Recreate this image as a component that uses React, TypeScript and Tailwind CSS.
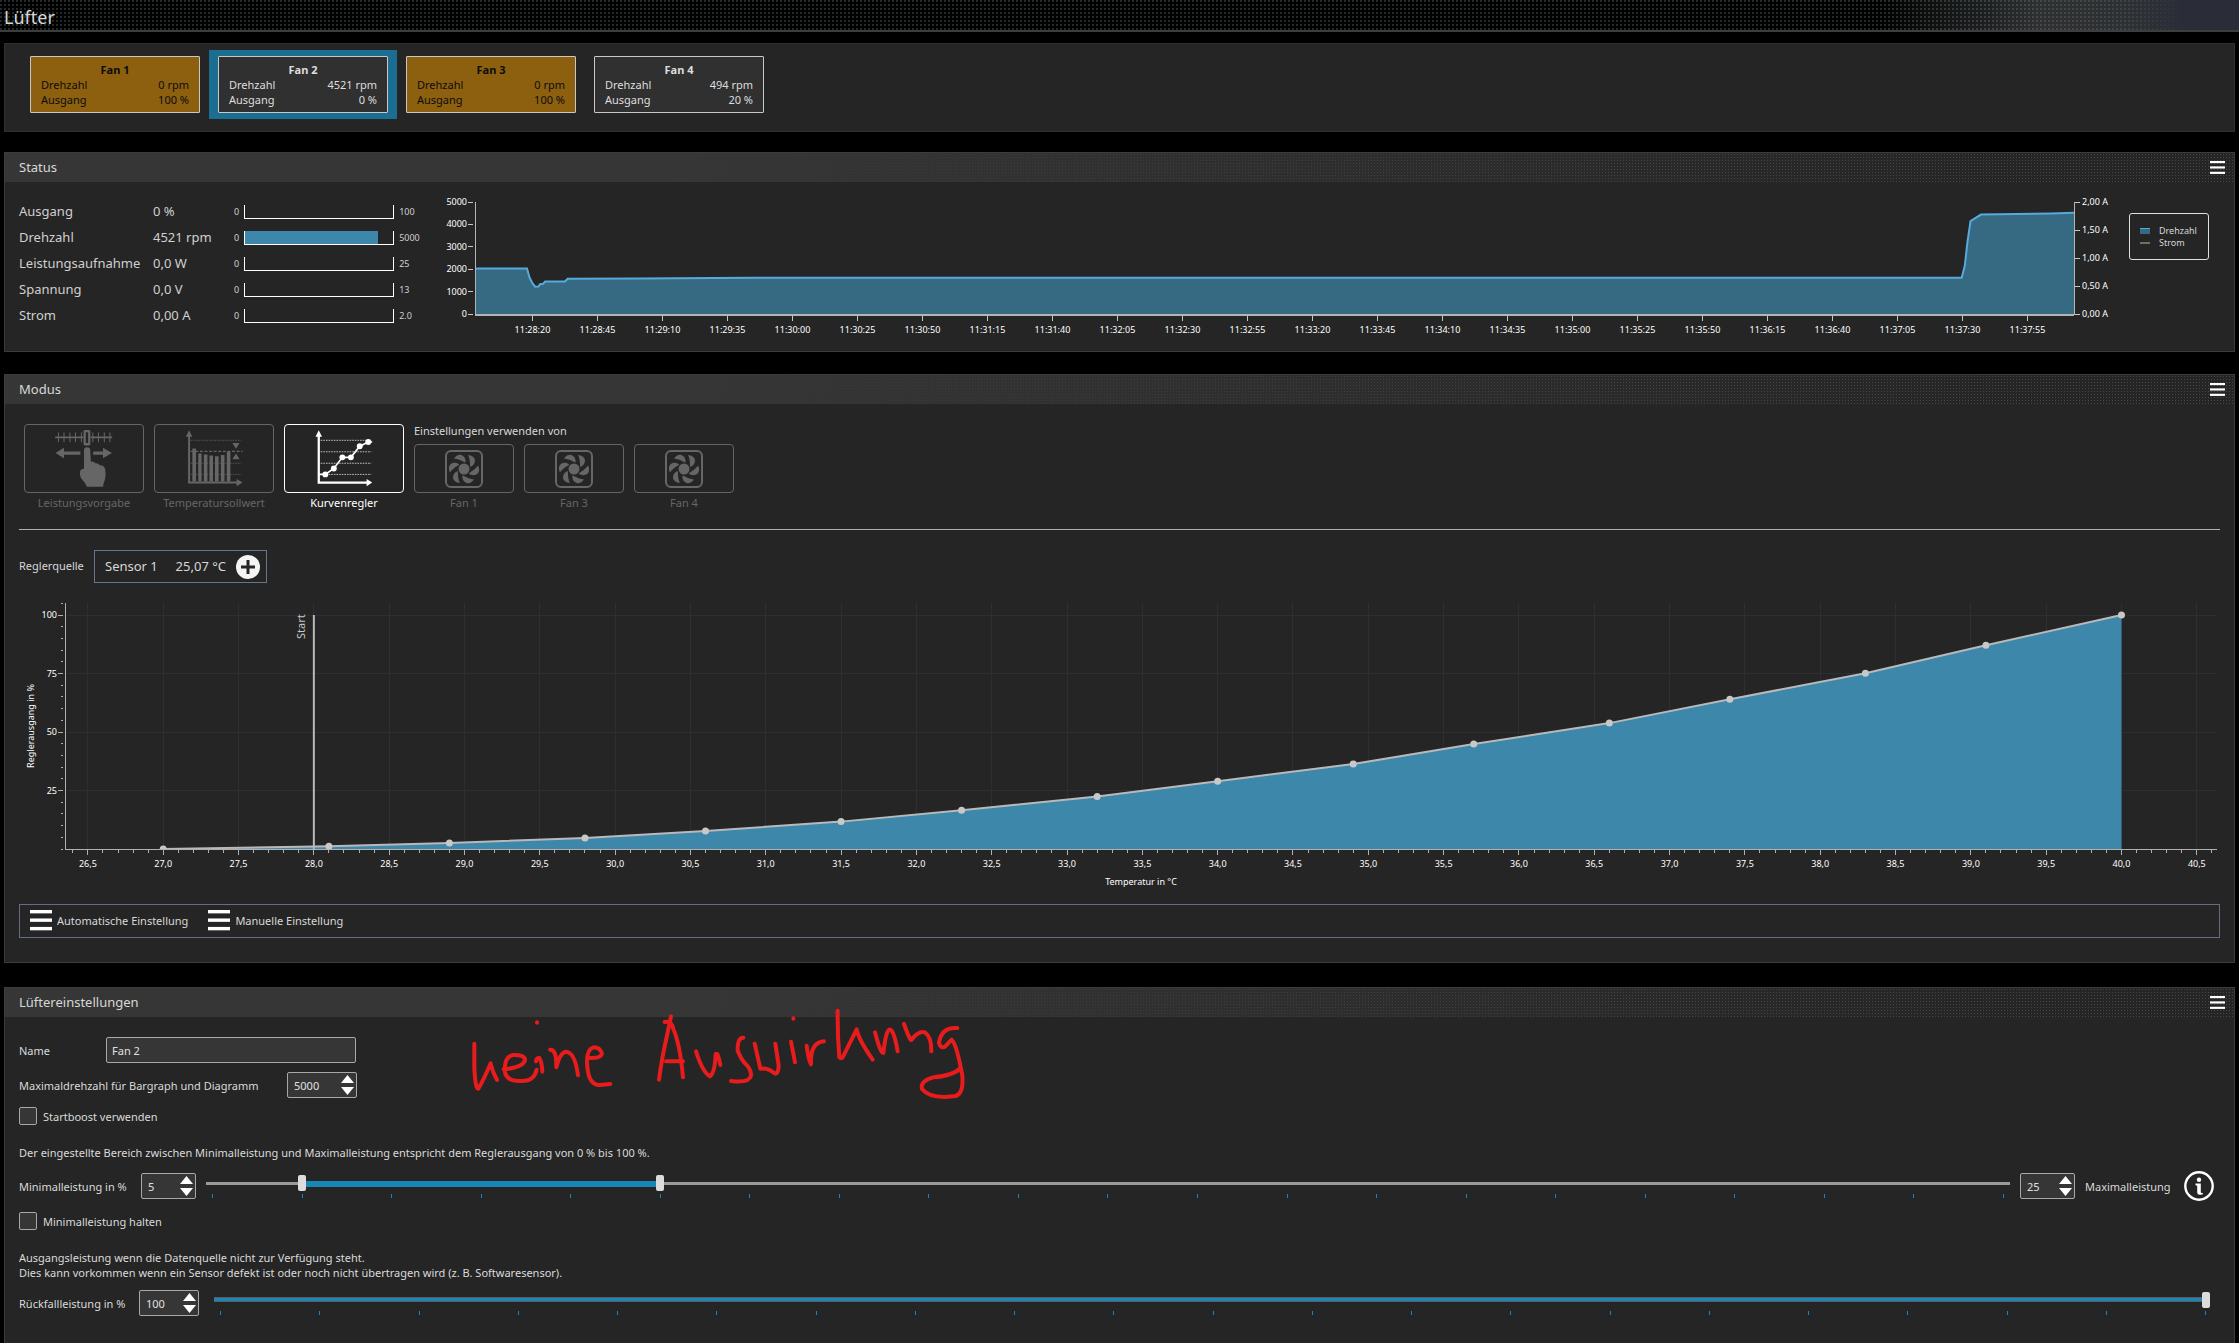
import { useState, type ReactNode } from 'react';
import { clsx } from 'clsx';

const fans = [
  { name: 'Fan 1', rpm: '0 rpm', output: '100 %', warning: true },
  { name: 'Fan 2', rpm: '4521 rpm', output: '0 %', warning: false },
  { name: 'Fan 3', rpm: '0 rpm', output: '100 %', warning: true },
  { name: 'Fan 4', rpm: '494 rpm', output: '20 %', warning: false },
];

const readings = [
  { label: 'Ausgang', value: '0 %', max: '100', fill: 0 },
  { label: 'Drehzahl', value: '4521 rpm', max: '5000', fill: 90 },
  { label: 'Leistungsaufnahme', value: '0,0 W', max: '25', fill: 0 },
  { label: 'Spannung', value: '0,0 V', max: '13', fill: 0 },
  { label: 'Strom', value: '0,00 A', max: '2.0', fill: 0 },
];

// temperature in °C, controller output in %
const curve = [
  [27, 0], [28.1, 1.2], [28.9, 2.6], [29.8, 4.7], [30.6, 7.7], [31.5, 11.7],
  [32.3, 16.6], [33.2, 22.4], [34, 29], [34.9, 36.3], [35.7, 44.9], [36.6, 53.8],
  [37.4, 64], [38.3, 75.1], [39.1, 87.1], [40, 100],
];

// seconds since the left edge of the chart, rpm
const history = [
  [0, 2030], [20, 2030], [21, 1620], [22.2, 1350], [23.2, 1220], [24.4, 1230], [25, 1330],
  [26.2, 1350], [27, 1450], [34.6, 1450], [35.6, 1570], [63, 1590], [106, 1615],
  [571.8, 1620], [573, 2150], [574, 3200], [575.2, 4150], [579.2, 4440], [606, 4490], [615, 4521],
];

function MenuIcon({ className }: { className: string }) {
  return (
    <svg viewBox="0 0 15 13" preserveAspectRatio="none" className={className} fill="currentColor">
      <rect width="15" height="2" />
      <rect y="5" width="15" height="2" />
      <rect y="10" width="15" height="2" />
    </svg>
  );
}

function Panel({ title, className, children }: { title: string; className?: string; children: ReactNode }) {
  return (
    <section className={clsx('relative border border-[#3c3c3c] bg-[#252525]', className)}>
      <header className="flex h-[29px] items-center justify-between pl-3.5 pr-[9px] [background:linear-gradient(to_right,#363636_30%,#36363600_90%),radial-gradient(circle_at_center,#484848_0.6px,transparent_0.9px)_0_0/3px_3px,#252525]">
        <h2 className="text-[13px] text-[#d8d8d8]">{title}</h2>
        <button aria-label={`Menü ${title}`} className="text-white">
          <MenuIcon className="h-[14px] w-[15px]" />
        </button>
      </header>
      {children}
    </section>
  );
}

function FanTiles() {
  const [selected, setSelected] = useState('Fan 2');

  return (
    <section className="flex h-[89px] border border-[#303030] bg-[#252525] px-4 pt-1.5">
      {fans.map((fan) => (
        <button
          key={fan.name}
          onClick={() => setSelected(fan.name)}
          className={clsx('h-[69px] px-[9px] py-1.5 text-[11px] leading-[15px]', selected === fan.name && 'bg-[#1b6d91]')}
        >
          <div
            className={clsx(
              'h-[57px] w-[170px] rounded-[1px] border border-[#c8c8c8] px-2.5 pt-[5px]',
              fan.warning ? 'bg-[#8c600e] text-[#0c0c0c]' : 'bg-[#303030] text-[#dedede]'
            )}
          >
            <div className="text-center font-bold">{fan.name}</div>
            <div className="flex justify-between">
              <span>Drehzahl</span>
              <span>{fan.rpm}</span>
            </div>
            <div className="flex justify-between">
              <span>Ausgang</span>
              <span>{fan.output}</span>
            </div>
          </div>
        </button>
      ))}
    </section>
  );
}

function Readings() {
  return (
    <div className="w-[412px] shrink-0">
      {readings.map((r) => (
        <div key={r.label} className="flex h-[26px] items-center text-[#d0d0d0]">
          <span className="w-[134px] text-[13px]">{r.label}</span>
          <span className="w-[81px] whitespace-nowrap text-[13px]">{r.value}</span>
          <span className="text-[9px]">0</span>
          <div className="mx-[5px] h-[14px] w-[150px] border-x border-b border-white">
            <div className="h-full bg-[#3c87aa]" style={{ width: `${r.fill}%` }} />
          </div>
          <span className="text-[9px]">{r.max}</span>
        </div>
      ))}
    </div>
  );
}

function clock(seconds: number) {
  const h = Math.floor(seconds / 3600);
  const m = Math.floor((seconds % 3600) / 60);
  return [h, m, seconds % 60].map((n) => String(n).padStart(2, '0')).join(':');
}

function StatusChart() {
  const line = history.map(([s, rpm]) => `${s},${5000 - rpm}`).join(' ');
  const ticks = Array.from({ length: 24 }, (_, i) => i * 25);
  const start = 11 * 3600 + 28 * 60 + 20;

  return (
    <svg className="ml-11 mr-[55px] h-[140px] min-w-0 flex-1 overflow-visible text-[9px]" fill="#ffffff">
      <svg width="100%" height="112" viewBox="0 0 615 5000" preserveAspectRatio="none">
        <polygon points={`0,5000 ${line} 615,5000`} fill="#366a82" />
        <polyline points={line} fill="none" stroke="#57aadb" strokeWidth="2" vectorEffect="non-scaling-stroke" />
      </svg>
      <g stroke="#b4b4b4" shapeRendering="crispEdges">
        <line x1="0" x2="0" y1="0" y2="113" />
        <line x1="100%" x2="100%" y1="0" y2="113" />
        <line x1="0" x2="100%" y1="113" y2="113" strokeWidth="2" />
      </g>
      {[5000, 4000, 3000, 2000, 1000, 0].map((v, i) => (
        <g key={v}>
          <line x1="-7" x2="-2" y1={i * 22.4} y2={i * 22.4} stroke="#c8c8c8" shapeRendering="crispEdges" />
          <text x="-8" y={i * 22.4 + 3} textAnchor="end">{v}</text>
        </g>
      ))}
      {['2,00 A', '1,50 A', '1,00 A', '0,50 A', '0,00 A'].map((v, i) => (
        <svg key={v} x="100%" y={i * 28} className="overflow-visible">
          <line x1="1" x2="6" y1="0" y2="0" stroke="#c8c8c8" shapeRendering="crispEdges" />
          <text x="8" y="3">{v}</text>
        </svg>
      ))}
      {ticks.map((s) => {
        const x = `${((s + 22.1) / 615) * 100}%`;
        return (
          <g key={s}>
            <line x1={x} x2={x} y1="114" y2="119" stroke="#c8c8c8" shapeRendering="crispEdges" />
            <text x={x} y="131" textAnchor="middle">{clock(start + s)}</text>
          </g>
        );
      })}
    </svg>
  );
}

function SliderIcon() {
  return (
    <svg viewBox="28 28 360 203" className="size-full" fill="currentColor" stroke="currentColor">
      <path d="M120 65H206M228 65H294" strokeWidth="6" />
      <path d="M130 50V80M147 50V80M165 50V80M182 50V80M200 50V80M235 50V80M252 50V80M270 50V80M287 50V80" strokeWidth="3" />
      <rect x="210" y="46" width="14" height="40" rx="1" fill="none" strokeWidth="7" />
      <path d="M121 113L147 97V108H197V118H147V129ZM293 113L266 97V108H236V118H266V129Z" stroke="none" />
      <path d="M208 103Q208 95 217 95Q227 95 227 103L229 140Q236 136 243 144Q252 143 256 150Q272 150 273 166Q276 185 268 205L266 216H217Q212 204 199 190Q193 176 198 164L208 160Z" stroke="none" />
    </svg>
  );
}

function SetpointIcon() {
  return (
    <svg viewBox="417 28 360 203" className="size-full" fill="currentColor" stroke="currentColor">
      <path d="M521 56V203H670" fill="none" strokeWidth="6" />
      <path d="M521 43L531 63H511ZM684 203L666 192V214Z" stroke="none" />
      <path d="M526 74H680M526 144H680M526 178H680" strokeWidth="3" strokeDasharray="5 3" opacity="0.7" />
      <path d="M526 108H684" strokeWidth="4" strokeDasharray="9 5" />
      <path d="M531 99h11V200h-11ZM549 114h10V200h-10ZM566 117h11V200h-11ZM583 120h11V200h-11ZM600 123h11V200h-11ZM618 119h11V200h-11ZM636 110h11V200h-11Z" stroke="none" />
      <path d="M653 82H675L664 100ZM653 132H675L664 114Z" stroke="none" />
    </svg>
  );
}

function CurveIcon() {
  const points = [[930, 178], [956, 160], [982, 126], [1008, 126], [1035, 92], [1061, 79]];
  return (
    <svg viewBox="807 28 360 203" className="size-full" fill="currentColor" stroke="currentColor">
      <path d="M910 56V203H1060" fill="none" strokeWidth="7" />
      <path d="M910 43L920 63H900ZM1073 203L1056 192V214Z" stroke="none" />
      <path d="M916 74H1070M916 109H1070M916 144H1070M916 178H1070" strokeWidth="3" strokeDasharray="5 3" opacity="0.7" />
      <path d="M910 178H930L956 160L982 126H1008L1035 92L1061 79H1073" fill="none" strokeWidth="5" />
      {points.map(([x, y]) => (
        <circle key={x} cx={x} cy={y} r="9" stroke="none" />
      ))}
    </svg>
  );
}

function FanIcon() {
  return (
    <svg viewBox="0 0 38 38" className="size-[38px]" fill="currentColor">
      <rect x="1" y="1" width="36" height="36" rx="5" fill="none" stroke="currentColor" strokeWidth="2" />
      <circle cx="19" cy="19" r="5.5" />
      {[0, 60, 120, 180, 240, 300].map((angle) => (
        <path
          key={angle}
          d="M-10 -10.5C-8 -13.5 -5 -15 -2.5 -14C1 -12.5 2 -9 1.5 -6.5C-1 -7 -3 -9.5 -10 -10.5Z"
          transform={`translate(19 19) rotate(${angle})`}
        />
      ))}
    </svg>
  );
}

const modes = [
  { label: 'Leistungsvorgabe', icon: SliderIcon },
  { label: 'Temperatursollwert', icon: SetpointIcon },
  { label: 'Kurvenregler', icon: CurveIcon },
];

function ModeBar() {
  const [mode, setMode] = useState('Kurvenregler');

  return (
    <div className="mx-3.5 flex h-[126px] gap-2.5 border-b border-[#b0b0b0] pl-[5px] pt-5 text-[11px] leading-4">
      {modes.map(({ label, icon: Icon }) => (
        <button
          key={label}
          onClick={() => setMode(label)}
          className={clsx('flex w-[120px] flex-col items-center gap-0.5 self-start', mode === label ? 'text-white' : 'text-[#666666]')}
        >
          <span className="flex h-[69px] w-full rounded border border-current">
            <Icon />
          </span>
          {label}
        </button>
      ))}
      <div className="text-[#d8d8d8]">
        <p className="-mt-0.5 mb-1 leading-[18px]">Einstellungen verwenden von</p>
        <div className="flex gap-2.5 text-[#666666]">
          {['Fan 1', 'Fan 3', 'Fan 4'].map((name) => (
            <button key={name} className="flex w-[100px] flex-col items-center gap-0.5">
              <span className="flex h-[49px] w-full items-center justify-center rounded border border-current">
                <FanIcon />
              </span>
              {name}
            </button>
          ))}
        </div>
      </div>
    </div>
  );
}

const T_MIN = 26.348;
const T_MAX = 40.634;
const PLOT_H = 246;
const tx = (t: number) => `${((t - T_MIN) / (T_MAX - T_MIN)) * 100}%`;
const py = (p: number) => PLOT_H - p * 2.34;

function CurveChart() {
  const line = curve.map(([t, p]) => `${t - T_MIN},${py(p)}`).join(' ');
  const tempTicks = Array.from({ length: 143 }, (_, i) => 264 + i);
  const outTicks = Array.from({ length: 22 }, (_, i) => i * 5);

  return (
    <svg className="block h-[286px] w-full overflow-visible text-[9px]" fill="#ffffff">
      <g stroke="#2e2e36" shapeRendering="crispEdges">
        {[25, 50, 75, 100].map((p) => (
          <line key={p} x1="0" x2="100%" y1={py(p)} y2={py(p)} />
        ))}
        {tempTicks.filter((t) => t % 5 === 0).map((t) => (
          <line key={t} x1={tx(t / 10)} x2={tx(t / 10)} y1="0" y2={PLOT_H} />
        ))}
      </g>
      <svg width="100%" height={PLOT_H} viewBox={`0 0 ${T_MAX - T_MIN} ${PLOT_H}`} preserveAspectRatio="none">
        <polygon points={`${27 - T_MIN},${PLOT_H} ${line} ${40 - T_MIN},${PLOT_H}`} fill="#3c87aa" />
        <polyline points={line} fill="none" stroke="#b9b9b9" strokeWidth="2" vectorEffect="non-scaling-stroke" />
      </svg>
      {/* the dot at 0 % is cut off by the axis */}
      <svg width="100%" height={PLOT_H}>
        {curve.map(([t, p]) => (
          <circle key={t} cx={tx(t)} cy={py(p)} r="3.5" fill="#c8c8c8" />
        ))}
      </svg>
      <line x1={tx(28)} x2={tx(28)} y1={py(100)} y2={PLOT_H} stroke="#b9b9b9" strokeWidth="2" />
      <svg x={tx(28)} y={py(100)} className="overflow-visible">
        <text transform="translate(-9 24) rotate(-90)" className="text-[11px]" fill="#c8c8c8">Start</text>
      </svg>
      <g stroke="#b0b0b0" shapeRendering="crispEdges">
        <line x1="0" x2="0" y1="0" y2={PLOT_H} />
        <line x1="0" x2="100%" y1={PLOT_H} y2={PLOT_H} />
        {outTicks.map((p) => (
          <line key={p} x1={p % 25 === 0 && p > 0 ? -7 : -4} x2="-2" y1={py(p)} y2={py(p)} />
        ))}
        {tempTicks.map((t) => (
          <line key={t} x1={tx(t / 10)} x2={tx(t / 10)} y1={PLOT_H + 1} y2={PLOT_H + (t % 5 === 0 ? 6 : 4)} />
        ))}
      </g>
      {[25, 50, 75, 100].map((p) => (
        <text key={p} x="-8" y={py(p) + 3} textAnchor="end">{p}</text>
      ))}
      {tempTicks.filter((t) => t % 5 === 0).map((t) => (
        <text key={t} x={tx(t / 10)} y={PLOT_H + 18} textAnchor="middle">
          {(t / 10).toFixed(1).replace('.', ',')}
        </text>
      ))}
      <text transform={`translate(-31 ${PLOT_H / 2}) rotate(-90)`} textAnchor="middle">Reglerausgang in %</text>
      <text x="50%" y={PLOT_H + 36} textAnchor="middle">Temperatur in °C</text>
    </svg>
  );
}

function NumberBox({ id, value, className }: { id: string; value: number; className: string }) {
  const [current, setCurrent] = useState(value);

  return (
    <div className={clsx('flex h-[26px] shrink-0 items-center rounded-[2px] border border-[#a8a8a8] bg-[#363636] pl-1.5 pr-[2px]', className)}>
      <input
        id={id}
        type="number"
        value={current}
        onChange={(e) => setCurrent(Number(e.target.value))}
        className="w-0 min-w-0 flex-1 bg-transparent text-[11px] text-[#e0e0e0] outline-none [appearance:textfield] [&::-webkit-inner-spin-button]:appearance-none"
      />
      <div className="flex flex-col gap-1 text-white">
        <button aria-label="Erhöhen" onClick={() => setCurrent(current + 1)}>
          <svg viewBox="0 0 13 8" className="block h-2 w-[13px]" fill="currentColor"><path d="M6.5 0L13 8H0Z" /></svg>
        </button>
        <button aria-label="Verringern" onClick={() => setCurrent(current - 1)}>
          <svg viewBox="0 0 13 8" className="block h-2 w-[13px]" fill="currentColor"><path d="M6.5 8L13 0H0Z" /></svg>
        </button>
      </div>
    </div>
  );
}

const thumb =
  'pointer-events-none absolute left-0.5 top-0 h-4 w-[calc(100%-4px)] appearance-none bg-transparent [&::-webkit-slider-thumb]:pointer-events-auto [&::-webkit-slider-thumb]:h-4 [&::-webkit-slider-thumb]:w-2 [&::-webkit-slider-thumb]:appearance-none [&::-webkit-slider-thumb]:rounded-[2px] [&::-webkit-slider-thumb]:bg-[#dcdcdc]';

function Slider({ from, to, labels }: { from?: number; to: number; labels: string[] }) {
  const single = from === undefined;
  const low = from ?? 0;

  return (
    <div className="relative h-[23px] flex-1">
      <div className={clsx('absolute left-0', single ? 'right-1.5 top-[5px] h-[5px] bg-[#5c5c62]' : 'right-0 top-[7px] h-[3px] bg-[#9a9a9a]')} />
      <div className={clsx('absolute top-1.5', single ? 'left-0 right-1.5 h-[3px]' : 'inset-x-1.5 h-1.5')}>
        <div className="h-full bg-[#1886b6]" style={{ marginLeft: `${low}%`, width: `${to - low}%` }} />
      </div>
      <div className="absolute inset-x-1.5 bottom-0 flex h-1 justify-between">
        {Array.from({ length: 21 }, (_, i) => (
          <span key={i} className="w-px bg-[#1886b6]" />
        ))}
      </div>
      {!single && <input type="range" aria-label={labels[0]} defaultValue={from} className={thumb} />}
      <input type="range" aria-label={labels[labels.length - 1]} defaultValue={to} className={thumb} />
    </div>
  );
}

function CheckRow({ label }: { label: string }) {
  return (
    <label className="flex h-[18px] items-center gap-1.5">
      <input type="checkbox" className="size-[18px] appearance-none rounded-[2px] border border-[#a8a8a8] bg-[#363636] checked:bg-[#1886b6]" />
      {label}
    </label>
  );
}

function Scribble() {
  return (
    <svg
      viewBox="0 0 1560 315"
      role="img"
      aria-label="keine Auswirkung"
      className="pointer-events-none absolute left-[455px] top-4 h-[105px] w-[520px] overflow-visible"
      fill="none"
      stroke="#e81c1c"
      strokeWidth="12"
      strokeLinecap="round"
      strokeLinejoin="round"
    >
      <path d="M43 119L43 190Q46 256 55 254Q70 230 92 178Q98 205 111 228" />
      <path d="M131 196Q190 190 195 168Q195 152 160 153Q134 156 134 200Q138 232 180 231Q222 234 230 197" />
      <path d="M228 172Q230 160 238 162Q246 175 247 203M231 55V56" />
      <path d="M270 137Q290 135 289 190Q300 145 318 143Q345 145 354 214" />
      <path d="M384 161Q424 165 426 148Q420 130 400 130Q382 135 381 170Q382 245 420 243L451 240" />
      <path d="M597 227Q604 170 622 90L633 37M614 54Q635 50 640 75Q660 120 669 220M618 172H669" />
      <path d="M708 142Q728 205 750 217Q765 205 767 150L772 150Q778 165 781 183" />
      <path d="M850 101Q832 100 833 140Q845 170 862 185Q874 200 873 215Q868 238 813 231" />
      <path d="M884 119L901 194Q925 190 945 209Q955 210 956 185L946 119" />
      <path d="M993 113L1005 175M1000 43V44" />
      <path d="M1040 125Q1045 165 1053 181Q1050 115 1092 112" />
      <path d="M1133 20Q1132 90 1138 160Q1143 166 1148 160L1190 76Q1195 105 1238 167" />
      <path d="M1245 85Q1262 150 1270 147Q1280 60 1295 80Q1305 95 1313 142" />
      <path d="M1332 60Q1350 110 1354 108Q1375 80 1395 85Q1415 100 1414 142" />
      <path d="M1492 72Q1445 68 1437 115Q1440 135 1455 128L1475 107Q1490 120 1507 215Q1512 275 1480 277Q1410 285 1386 255Q1380 230 1420 220Q1480 215 1502 192" />
    </svg>
  );
}

function FanSettings() {
  return (
    <div className="px-3.5 pt-5 text-[11px] leading-[15px] text-[#dadada]">
      <div className="flex items-center">
        <label htmlFor="fan-name" className="w-[87px]">Name</label>
        <input
          id="fan-name"
          defaultValue="Fan 2"
          className="h-[26px] w-[250px] rounded-[2px] border border-[#a8a8a8] bg-[#363636] px-[5px] text-[#e0e0e0]"
        />
      </div>
      <div className="mt-[9px] flex w-[338px] items-center justify-between">
        <label htmlFor="max-rpm">Maximaldrehzahl für Bargraph und Diagramm</label>
        <NumberBox id="max-rpm" value={5000} className="w-[70px]" />
      </div>
      <div className="mt-[9px]">
        <CheckRow label="Startboost verwenden" />
      </div>
      <p className="mt-5">
        Der eingestellte Bereich zwischen Minimalleistung und Maximalleistung entspricht dem Reglerausgang von 0 % bis 100 %.
      </p>
      <div className="mt-[11px] flex items-center gap-2.5">
        <label htmlFor="min-power" className="w-28 whitespace-nowrap">Minimalleistung in %</label>
        <NumberBox id="min-power" value={5} className="w-[55px]" />
        <Slider from={5} to={25} labels={['Minimalleistung', 'Maximalleistung']} />
        <NumberBox id="max-power" value={25} className="w-[55px]" />
        <label htmlFor="max-power" className="w-[89px] whitespace-nowrap">Maximalleistung</label>
        <button aria-label="Information" className="mr-1.5 text-white">
          <svg viewBox="0 0 30 30" className="block size-[30px]" fill="currentColor">
            <circle cx="15" cy="15" r="13.7" fill="none" stroke="currentColor" strokeWidth="2.4" />
            <circle cx="15" cy="8.8" r="2.2" />
            <path d="M11.5 12.5H16.8V21.3Q17 22.3 18.8 21.8V23.2Q13.2 25 13.2 21.5V14.8L11.5 14.2Z" />
          </svg>
        </button>
      </div>
      <div className="mt-[11px]">
        <CheckRow label="Minimalleistung halten" />
      </div>
      <p className="mt-5">
        Ausgangsleistung wenn die Datenquelle nicht zur Verfügung steht.
        <br />
        Dies kann vorkommen wenn ein Sensor defekt ist oder noch nicht übertragen wird (z. B. Softwaresensor).
      </p>
      <div className="mt-2.5 flex items-center pr-2">
        <label htmlFor="fallback" className="w-[120px] whitespace-nowrap">Rückfallleistung in %</label>
        <NumberBox id="fallback" value={100} className="mr-[15px] w-[60px]" />
        <Slider to={100} labels={['Rückfallleistung']} />
      </div>
    </div>
  );
}

export default function App() {
  return (
    <div className="flex min-h-screen flex-col bg-black font-['Noto_Sans','Open_Sans',sans-serif]">
      <header className="flex h-8 items-end border-b-2 border-[#3e3e3e] pl-1 [background:linear-gradient(to_right,transparent_95%,#2a2d37_97.5%),linear-gradient(to_right,transparent_84%,#787d8060_91%,#50555a90_96%),conic-gradient(from_0deg_at_2px_2px,transparent_270deg,#242a2a_0)_0_0/4px_4px,#000]">
        <h1 className="text-lg leading-[26px] text-[#d8d8d8]">Lüfter</h1>
      </header>
      <main className="flex flex-1 flex-col px-1 pt-[11px]">
        <FanTiles />
        <Panel title="Status" className="mt-5">
          <div className="flex h-[169px] items-start pl-3.5 pr-[25px] pt-[17px]">
            <Readings />
            <div className="flex min-w-0 flex-1 pt-[3px]">
              <StatusChart />
            </div>
            <ul className="mt-3.5 flex h-[47px] w-20 shrink-0 flex-col justify-center rounded-[3px] border border-[#e0e0e0] pl-2.5 text-[9px] leading-3 text-[#d8d8d8]">
              <li className="flex items-center gap-[9px]">
                <span className="h-1.5 w-2.5 border-t border-[#57aadb] bg-[#366a82]" />
                Drehzahl
              </li>
              <li className="flex items-center gap-[9px]">
                <span className="h-0.5 w-2.5 bg-[#6e6e6e]" />
                Strom
              </li>
            </ul>
          </div>
        </Panel>
        <Panel title="Modus" className="mt-[22px]">
          <ModeBar />
          <div className="mx-3.5 mt-5 flex items-center gap-2.5 text-[11px] text-[#d8d8d8]">
            <span className="w-[65px]">Reglerquelle</span>
            <button className="flex h-[33px] w-[173px] items-center border border-[#65758c] pl-2.5 pr-1.5 text-[13px]">
              <span>Sensor 1</span>
              <span className="ml-auto mr-2.5">25,07 °C</span>
              <svg viewBox="0 0 24 24" className="size-6">
                <circle cx="12" cy="12" r="12" fill="#f4f4f4" />
                <path d="M12 5V19M5 12H19" stroke="#252525" strokeWidth="3" />
              </svg>
            </button>
          </div>
          <div className="mt-5 pl-[60px] pr-[17px]">
            <CurveChart />
          </div>
          <div className="mx-3.5 mb-6 mt-[15px] flex h-[34px] items-center gap-5 border border-[#656d84] px-2.5 text-[11px] text-[#d8d8d8]">
            <button className="flex items-center gap-[5px]">
              <MenuIcon className="h-[22px] w-[22px] text-white" />
              Automatische Einstellung
            </button>
            <button className="flex items-center gap-[5px]">
              <MenuIcon className="h-[22px] w-[22px] text-white" />
              Manuelle Einstellung
            </button>
          </div>
        </Panel>
        <Panel title="Lüftereinstellungen" className="mt-6 flex-1 border-b-0">
          <FanSettings />
          <Scribble />
        </Panel>
      </main>
    </div>
  );
}
